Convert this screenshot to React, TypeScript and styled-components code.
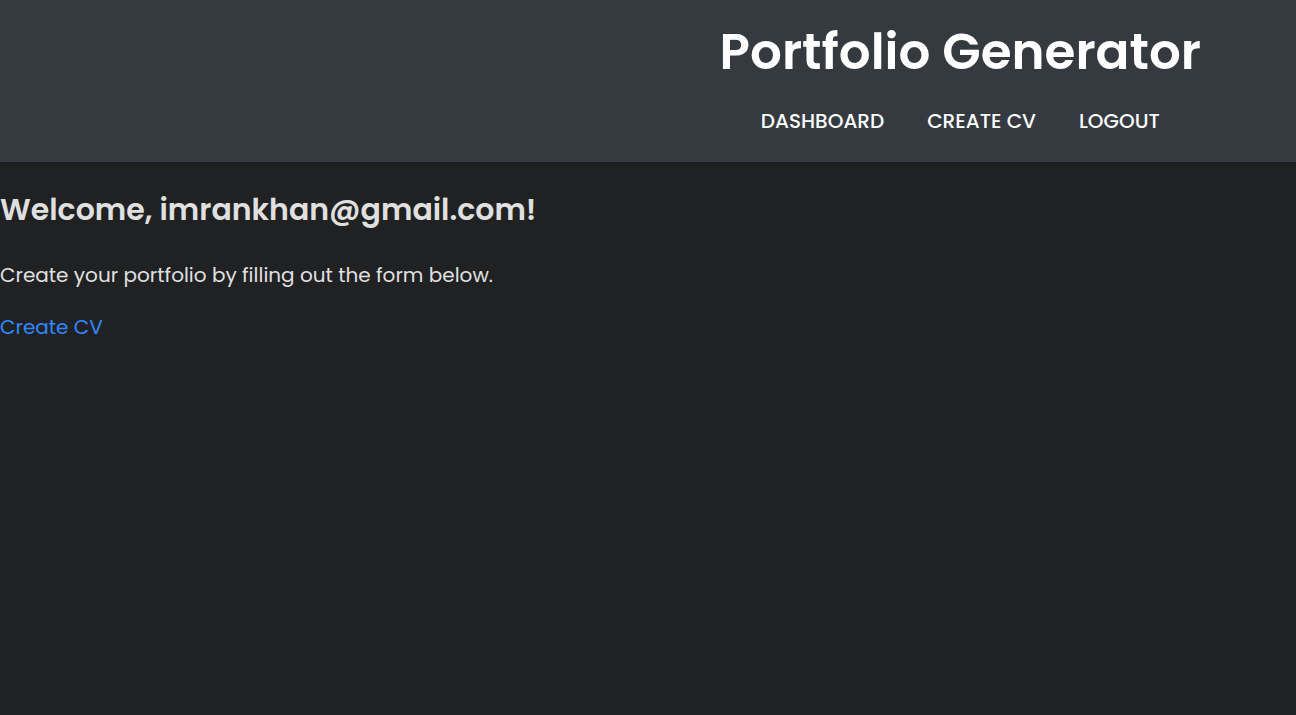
import React from "react";
import styled, { createGlobalStyle } from "styled-components";

const GlobalStyle = createGlobalStyle`
  *, *::before, *::after { box-sizing: border-box; }
  body {
    margin: 0;
    background: #1f2122;
    color: #e0e0e0;
    font-family: Poppins, Inter, "Open Sans", sans-serif;
    font-size: 20px;
    line-height: 32px;
  }
`;

const Page = styled.div`
  min-height: 100vh;
`;

const Header = styled.header`
  display: flex;
  justify-content: flex-end;
  padding: 16px 95px 25px;
  background: #353a41;
  color: #ffffff;
  box-shadow: 0 2px 5px rgba(0, 0, 0, 0.1);
`;

const Banner = styled.div`
  display: flex;
  flex-direction: column;
  align-items: center;
  gap: 17px;
`;

const Brand = styled.h1`
  margin: 0;
  font-size: 50px;
  font-weight: 600;
  line-height: 72px;
`;

const Nav = styled.nav`
  display: flex;
  gap: 43px;
`;

const NavLink = styled.a`
  color: inherit;
  font-size: 20px;
  font-weight: 500;
  text-decoration: none;
  text-transform: uppercase;
`;

const Main = styled.main`
  display: flex;
  flex-direction: column;
  align-items: flex-start;
  gap: 20px;
  padding: 24px 0;
`;

const Welcome = styled.h2`
  margin: 0 0 5px;
  font-size: 30px;
  font-weight: 600;
  line-height: 48px;
`;

const Intro = styled.p`
  margin: 0;
`;

const CreateLink = styled.a`
  color: #3287ff;
  text-decoration: none;
`;

export default function App() {
  return (
    <Page>
      <GlobalStyle />
      <Header>
        <Banner>
          <Brand>Portfolio Generator</Brand>
          <Nav aria-label="Main">
            <NavLink href="#dashboard">Dashboard</NavLink>
            <NavLink href="#create-cv">Create CV</NavLink>
            <NavLink href="#logout">Logout</NavLink>
          </Nav>
        </Banner>
      </Header>
      <Main>
        <Welcome>Welcome, imrankhan@gmail.com!</Welcome>
        <Intro>Create your portfolio by filling out the form below.</Intro>
        <CreateLink href="#create-cv">Create CV</CreateLink>
      </Main>
    </Page>
  );
}
